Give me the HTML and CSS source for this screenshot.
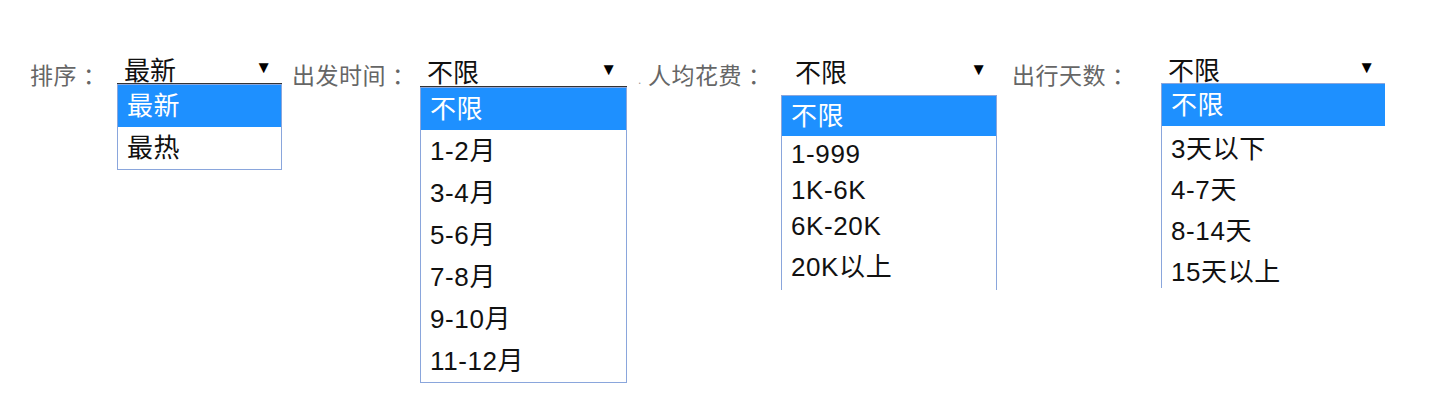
FILE: index.html
```html
<!DOCTYPE html>
<html lang="zh-CN">
<head>
<meta charset="utf-8">
<title>筛选</title>
<link rel="stylesheet" href="styles.css">
</head>
<body>
<div class="filters">
  <div class="group g1">
    <span class="label l1">排序<span class="colon">：</span></span>
    <div class="select s1 underline">
      <span class="value">最新</span><span class="arrow">▼</span>
      <ul class="menu m1">
        <li class="active">最新</li>
        <li>最热</li>
      </ul>
    </div>
  </div>
  <div class="group g2">
    <span class="label l2">出发时间<span class="colon">：</span></span>
    <div class="select s2 underline">
      <span class="value">不限</span><span class="arrow">▼</span>
      <ul class="menu m2">
        <li class="active">不限</li>
        <li>1-2月</li>
        <li>3-4月</li>
        <li>5-6月</li>
        <li>7-8月</li>
        <li>9-10月</li>
        <li>11-12月</li>
      </ul>
    </div>
  </div>
  <div class="group g3">
    <span class="label l3"><span class="dot">.</span>人均花费<span class="colon">：</span></span>
    <div class="select s3">
      <span class="value">不限</span><span class="arrow">▼</span>
      <ul class="menu m3 clipped">
        <li class="active">不限</li>
        <li>1-999</li>
        <li>1K-6K</li>
        <li>6K-20K</li>
        <li class="last">20K以上</li>
      </ul>
    </div>
  </div>
  <div class="group g4">
    <span class="label l4">出行天数<span class="colon">：</span></span>
    <div class="select s4 underline">
      <span class="value">不限</span><span class="arrow">▼</span>
      <ul class="menu m4 clipped">
        <li class="active">不限</li>
        <li>3天以下</li>
        <li>4-7天</li>
        <li>8-14天</li>
        <li>15天以上</li>
      </ul>
    </div>
  </div>
</div>
</body>
</html>
```

FILE: styles.css
```css
* { box-sizing: border-box; }
html, body { margin: 0; padding: 0; background: #fff; }
body {
  width: 1432px;
  height: 404px;
  overflow: hidden;
  font-family: "Liberation Sans", "Noto Sans CJK SC", sans-serif;
}
.filters {
  display: flex;
  align-items: flex-start;
  padding: 58px 0 0 30px;
}
.group {
  display: flex;
  align-items: flex-start;
}
.g2 { margin-left: 10px; }
.g3 { margin-left: 11px; }
.g4 { margin-left: 15px; }
.label {
  font-size: 23px;
  line-height: 36px;
  color: #666;
  white-space: nowrap;
  letter-spacing: 0.5px;
}
.colon { margin-left: 6px; }
.dot {
  display: inline-block;
  width: 10px;
  font-size: 12px;
  color: #999;
}
.l1 { width: 87px; }
.l2 { width: 128px; }
.l3 { width: 143px; }
.l4 { width: 149px; }
.select {
  position: relative;
  display: flex;
  justify-content: space-between;
  align-items: flex-start;
  height: 27px;
  padding: 0 10px 0 7px;
  font-size: 26px;
  line-height: 27px;
  color: #111;
}
.underline { border-bottom: 2px solid #333; }
.s1 { width: 165px; }
.s2 { width: 207px; height: 30px; padding-top: 2px; }
.s3 { width: 216px; padding-left: 14px; height: 36px; padding-top: 2px; }
.s4 { width: 224px; }
.value { white-space: nowrap; }
.arrow {
  font-size: 17px;
  line-height: 20px;
  color: #000;
}
.menu {
  position: absolute;
  left: 0;
  top: 100%;
  width: 100%;
  margin: 0;
  padding: 0;
  list-style: none;
  background: #fff;
  border: 1px solid #8aa6dc;
  font-size: 26px;
  letter-spacing: 0.6px;
  color: #111;
}
.s1 .menu, .s2 .menu, .s3 .menu { margin-top: 1px; }
.menu li {
  height: 42px;
  line-height: 42px;
  padding-left: 9px;
  white-space: nowrap;
}
.m3 li { height: 36px; line-height: 36px; }
.m3 li.active { height: 40px; line-height: 40px; }
.m3 li.last { height: 46px; line-height: 46px; }
.m4 li { height: 41px; line-height: 46px; }
.m4 li.active { height: 42px; line-height: 42px; }
.menu li.active {
  background: #1e90ff;
  color: #fff;
}
.clipped {
  height: 195px;
  overflow: hidden;
  border-bottom: none;
}
.m4 { height: 205px; border-right: none; }
```
